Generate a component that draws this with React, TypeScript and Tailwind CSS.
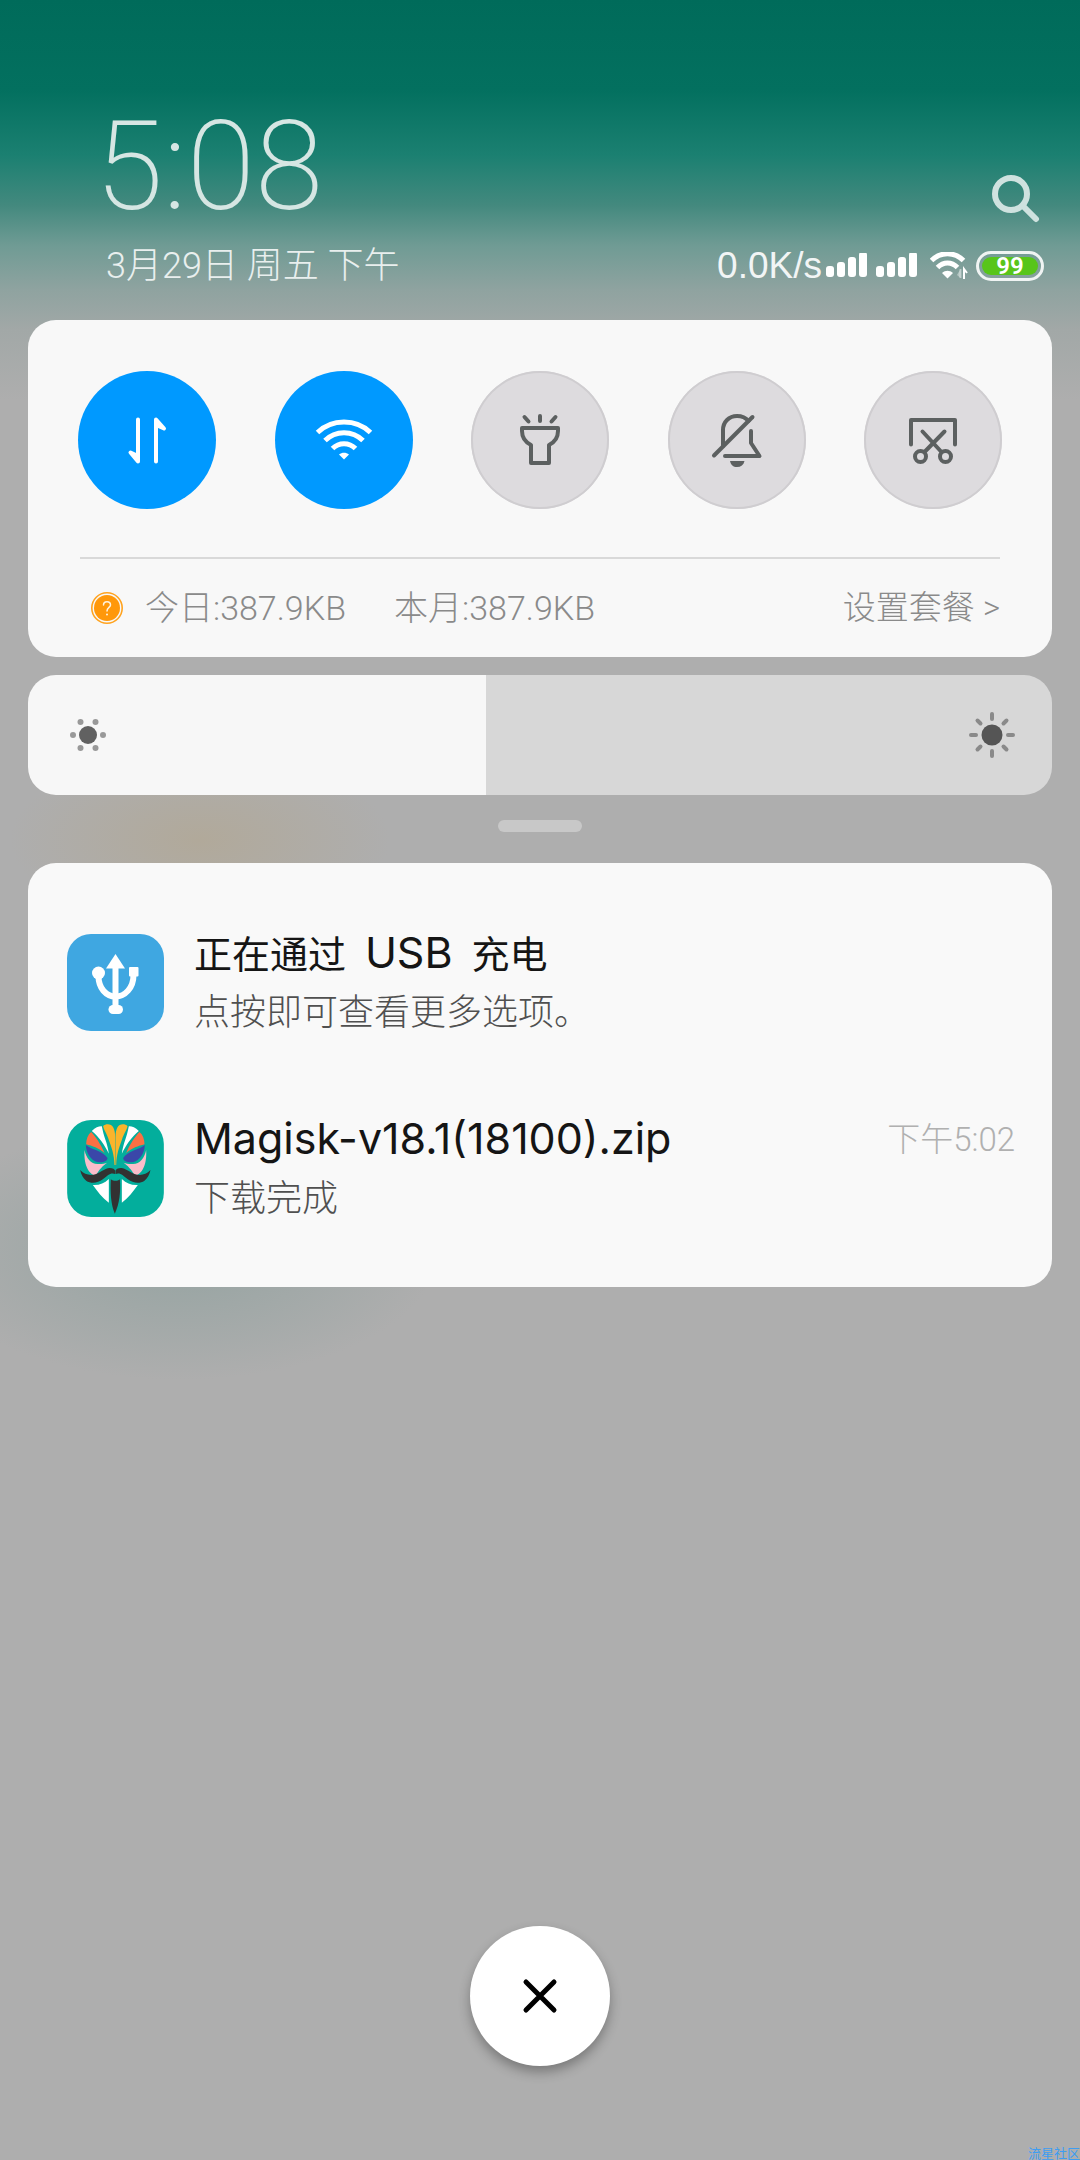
import React, { useState } from 'react';

interface ToggleItem {
  label: string;
  active: boolean;
  icon: React.ElementType;
}

interface NotificationProps {
  icon: React.ReactNode;
  title: React.ReactNode;
  text: string;
  time?: string;
}

const DataIcon: React.FC = () => (
  <svg viewBox="0 0 138 138" className="w-full h-full" fill="none" stroke="currentColor" strokeWidth="4" strokeLinecap="round" strokeLinejoin="round">
    <path d="M60 48.5V90.5L52.500 81.500L60 85" fill="currentColor" />
    <path d="M78 90.500V48.500L86 57.500L78 54" fill="currentColor" />
  </svg>
);

const WifiIcon: React.FC = () => (
  <svg viewBox="0 0 138 138" className="w-full h-full" fill="none" stroke="currentColor" strokeWidth="5">
    <path d="M42.500 61.500C57 47.500 81 47.500 95.500 61.500" />
    <path d="M50 69.500C60.500 59 77.500 59 88 69.500" />
    <path d="M57.500 77.500C64 71 74 71 80.500 77.500" />
    <path d="M64 83.500C67 81 71 81 74 83.500L69 88.500Z" fill="currentColor" stroke="none" />
  </svg>
);

const TorchIcon: React.FC = () => (
  <svg viewBox="0 0 138 138" className="w-full h-full" fill="none" stroke="currentColor" strokeWidth="4" strokeLinecap="round" strokeLinejoin="round">
    <path d="M53.500 46L57.500 50.500M69 45V50M84.500 46L80.500 50.500" />
    <path d="M51 57H87V60C87 66 84 71 78 74V92H60V74C54 71 51 66 51 60Z" />
  </svg>
);

const MuteIcon: React.FC = () => (
  <svg viewBox="0 0 138 138" className="w-full h-full" fill="none" stroke="currentColor" strokeWidth="4" strokeLinecap="round" strokeLinejoin="round">
    <path d="M55 75V59C55 51 61 45 69 45C74 45 78 47 80.500 50" />
    <path d="M84.500 46L46 84.500" />
    <path d="M83 60V72L91.500 85H57" />
    <path d="M62 90H76.500C75.500 94 73 96 69 96C65 96 63 94 62 90Z" fill="currentColor" stroke="none" />
  </svg>
);

const ScreenshotIcon: React.FC = () => (
  <svg viewBox="0 0 138 138" className="w-full h-full" fill="none" stroke="currentColor" strokeWidth="4" strokeLinecap="round" strokeLinejoin="round">
    <path d="M47 73.500V49H91V73.500" />
    <path d="M58.500 60.500L77.500 81M80.500 60.500L60.500 81" />
    <circle cx="56.500" cy="85.500" r="5.500" />
    <circle cx="81.500" cy="85.500" r="5.500" />
  </svg>
);

const SignalIcon: React.FC = () => (
  <svg viewBox="0 0 42 26" className="w-[42px] h-[26px] fill-white">
    <rect x="0" y="13" width="8" height="11" rx="3" />
    <rect x="11" y="9" width="8" height="15" rx="3" />
    <rect x="22" y="4" width="8" height="20" rx="3" />
    <rect x="33" y="-1" width="8" height="25" rx="3" />
  </svg>
);

const StatusWifiIcon: React.FC = () => (
  <svg viewBox="0 0 38 28" className="w-[38px] h-[28px]" fill="none" stroke="#fff" strokeWidth="5">
    <path d="M1.500 8.500C10.500 -0.500 24.500 -0.500 33.500 8.500" />
    <path d="M7.500 15.500C13.500 9.500 21.500 9.500 27.500 15.500" />
    <path d="M12 21C15.500 18 19.500 18 23 21L17.500 26.500Z" fill="#fff" stroke="none" />
    <path d="M30.500 26V17L27 23Z" fill="#fff" fillOpacity="0.400" stroke="none" />
    <path d="M30.500 26V17" strokeOpacity="0.400" strokeWidth="2" />
    <path d="M34 27V17L37 21" strokeWidth="2" />
  </svg>
);

const CoinIcon: React.FC = () => (
  <svg viewBox="0 0 32 32" className="w-8 h-8" fill="none">
    <circle cx="16" cy="16" r="15.200" stroke="#ffa31f" strokeWidth="1.600" />
    <circle cx="16" cy="16" r="13" fill="#ff980a" />
    <path d="M12.500 13C12.500 8.500 19.500 8.500 19.500 13C19.500 15.500 16 15.500 16 19" stroke="#fff3df" strokeWidth="1.500" strokeLinecap="round" />
    <circle cx="16" cy="22.500" r="1" fill="#fff3df" />
  </svg>
);

const DimIcon: React.FC = () => (
  <svg viewBox="0 0 40 40" className="w-10 h-10" fill="#999">
    <circle cx="20" cy="20" r="9" fill="#616161" />
    <circle cx="5" cy="20" r="3" />
    <circle cx="35" cy="20" r="3" />
    <circle cx="12.500" cy="7" r="3" />
    <circle cx="27.500" cy="7" r="3" />
    <circle cx="12.500" cy="33" r="3" />
    <circle cx="27.500" cy="33" r="3" />
  </svg>
);

const BrightIcon: React.FC = () => (
  <svg viewBox="0 0 48 48" className="w-12 h-12" stroke="#8a8a8a" strokeWidth="4" strokeLinecap="round">
    <circle cx="24" cy="24" r="10.500" fill="#555" stroke="none" />
    <path d="M24 3V8M24 40V45M3 24H8M40 24H45M9.500 9.500L12.500 12.500M35.500 35.500L38.500 38.500M9.500 38.500L12.500 35.500M35.500 12.500L38.500 9.500" />
  </svg>
);

const UsbIcon: React.FC = () => (
  <svg viewBox="0 0 97 97" className="w-[97px] h-[97px] shrink-0">
    <rect width="97" height="97" rx="24" fill="#3fa7e1" />
    <g fill="#fff">
      <path d="M48.500 20L58 34.500H39Z" />
      <rect x="45.500" y="30" width="6" height="44" />
      <rect x="41.500" y="71" width="14.500" height="9" rx="4.500" />
      <circle cx="31.500" cy="39" r="6.500" />
      <rect x="62" y="33" width="9.500" height="9.500" rx="1" />
    </g>
    <path d="M31.500 42C31.500 54 39 62.500 48.500 62.500C58 62.500 66.500 54 66.500 41" fill="none" stroke="#fff" strokeWidth="6" />
  </svg>
);

// one half of the mask, drawn twice
const MaskHalf: React.FC = () => (
  <>
    <path d="M193 193C192 160 184 140 176 118C170 98 160 86 159 76C166 68 184 68 189 80C193 88 195 96 195 110V193Z" fill="#fbb42b" />
    <path d="M125 91C136 80 148 76 155 77C158 92 161 104 166 118C170 130 174 144 176 159C164 134 146 108 125 91Z" fill="#fff" />
    <path d="M123 94C136 108 152 130 163 157C146 142 126 136 108 131C108 116 113 102 123 94Z" fill="#fb7043" />
    <path d="M103 148C108 172 122 190 142 190C154 191 164 188 171 186C160 194 146 206 137 225C120 222 100 200 103 148Z" fill="#fabdca" />
    <path d="M107 133C122 146 160 152 172 172C171 184 154 187 141 184C124 179 108 160 107 133Z" fill="#3a47a9" />
    <path d="M90 208C104 222 120 226 138 220C156 212 164 204 178 202C188 202 194 206 195 210V220C182 214 172 224 158 236C142 248 122 250 108 240C98 232 93 222 90 208Z" fill="#323232" />
    <path d="M128 253C148 254 162 248 176 235V306C156 292 142 272 128 253Z" fill="#fff" />
  </>
);

const MagiskIcon: React.FC = () => (
  <svg viewBox="51 58 290 291" className="w-[97px] h-[97px] shrink-0">
    <rect x="51" y="58" width="290" height="291" rx="72" fill="#03ae9c" />
    <MaskHalf />
    <g transform="translate(391 0) scale(-1 1)">
      <MaskHalf />
    </g>
    <path d="M182 236C190 242 202 242 209 236C212 274 208 310 194 339C182 312 180 274 182 236Z" fill="#323232" />
  </svg>
);

const Notification: React.FC<NotificationProps> = ({ icon, title, text, time }) => (
  <li className="flex items-center gap-[30px] py-[33px]">
    {icon}
    <div className="flex-1 min-w-0 pt-1">
      <div className="flex items-start justify-between">
        <h2 className="text-[38px] leading-[58px] font-normal text-[#151515] whitespace-pre">{title}</h2>
        {time && <time className="text-[33px] leading-[56px] font-light text-[#b0b0b0]">{time}</time>}
      </div>
      <p className="text-[36px] leading-[58px] font-light text-[#505050]">{text}</p>
    </div>
  </li>
);

const toggles: ToggleItem[] = [
  { label: '移动数据', active: true, icon: DataIcon },
  { label: 'WLAN', active: true, icon: WifiIcon },
  { label: '手电筒', active: false, icon: TorchIcon },
  { label: '静音', active: false, icon: MuteIcon },
  { label: '截屏', active: false, icon: ScreenshotIcon },
];

const App: React.FC = () => {
  const [brightness, setBrightness] = useState<number>(114);
  const percent = (brightness / 255) * 100;

  return (
    <div
      className="relative min-h-screen flex flex-col px-7 overflow-hidden font-['Roboto','Noto_Sans_CJK_SC',sans-serif] bg-[#aeaeae] bg-[radial-gradient(ellipse_190px_90px_at_200px_840px,#b1a99a,transparent),radial-gradient(ellipse_260px_130px_at_180px_1250px,#94a3a1,transparent),linear-gradient(to_bottom,#006b5a_0px,#03705f_90px,#1b8071_155px,#43897e_205px,#6f9b94_245px,#8fa3a0_290px,#a2a8a7_330px,#aeaeae_400px)]"
    >
      {/* Clock and status */}
      <header className="pt-[107px] pb-[29px]">
        <div className="flex items-end justify-between pl-[67px] pr-3">
          <div className="text-[124px] leading-[120px] font-extralight text-[#d6e6e3]">5:08</div>
          <button aria-label="搜索" className="mb-1 text-[#cfe2df]">
            <svg viewBox="0 0 48 48" className="w-12 h-12" fill="none" stroke="currentColor" strokeWidth="6" strokeLinecap="round">
              <circle cx="19" cy="19" r="16" />
              <path d="M31 31L44 44" />
            </svg>
          </button>
        </div>
        <div className="mt-[14px] flex items-center justify-between pl-[78px] pr-2">
          <div className="text-[36px] leading-[50px] font-light text-[#e9efee]">3月29日 周五 下午</div>
          <div className="flex items-center gap-2">
            <div className="flex items-center gap-1">
              <span className="font-['Liberation_Sans',sans-serif] text-[37px] leading-[50px] text-[#f2f5f5]">0.0K/s</span>
              <SignalIcon />
            </div>
            <div className="flex items-center gap-3">
              <SignalIcon />
              <StatusWifiIcon />
            </div>
            <div className="w-[68px] h-[30px] rounded-full border-[3px] border-[#f0f4f3] p-[3px]">
              <div className="flex items-center justify-center h-full rounded-full bg-[#58c51a] text-white text-[24px] leading-[18px] font-semibold">99</div>
            </div>
          </div>
        </div>
      </header>

      <main>
        {/* Quick toggles */}
        <section className="rounded-[28px] bg-[#f8f8f8] pt-[51px]">
          <div className="flex justify-between px-[50px]">
            {toggles.map(({ label, active, icon: Icon }) => (
              <button
                key={label}
                aria-label={label}
                aria-pressed={active}
                className={`w-[138px] h-[138px] rounded-full ${
                  active ? 'bg-[#0099ff] text-white' : 'bg-[#dddbde] text-[#5c6060] shadow-[inset_0_0_0_2px_#cfcdd0]'
                }`}
              >
                <Icon />
              </button>
            ))}
          </div>
          <div className="mx-[52px] mt-12 border-t-2 border-[#d9d9d9] h-[100px] flex items-center text-[34px] font-light text-[#8a8a8a]">
            <div className="ml-[11px] mr-[22px]">
              <CoinIcon />
            </div>
            <span className="mr-12">今日:387.9KB</span>
            <span>本月:387.9KB</span>
            <a href="#plan" className="ml-auto text-[33px]">设置套餐 &gt;</a>
          </div>
        </section>

        {/* Brightness */}
        <section className="relative mt-[18px] h-[120px] rounded-[28px] overflow-hidden">
          <input
            type="range"
            min="0"
            max="255"
            value={brightness}
            onChange={(e) => setBrightness(Number(e.target.value))}
            aria-label="亮度"
            className="block w-full h-full appearance-none cursor-pointer [&::-webkit-slider-thumb]:appearance-none [&::-webkit-slider-thumb]:w-0"
            style={{ background: `linear-gradient(to right, #f7f7f7 ${percent}%, #d7d7d7 ${percent}%)` }}
          />
          <div className="absolute inset-0 flex items-center justify-between pl-10 pr-9 pointer-events-none">
            <DimIcon />
            <BrightIcon />
          </div>
        </section>

        <div className="mx-auto mt-[25px] mb-[31px] w-[84px] h-3 rounded-full bg-[#c8c8c8]" />

        {/* Notifications */}
        <ul className="rounded-[28px] bg-[#f9f9f9] py-[26px] pl-[39px] pr-[37px]">
          <Notification
            icon={<UsbIcon />}
            title={<>正在通过{'  '}<span className="font-['Inter',sans-serif] text-[43px] leading-none">USB</span>{'  '}充电</>}
            text="点按即可查看更多选项。"
          />
          <Notification
            icon={<MagiskIcon />}
            title={<span className="font-['Inter',sans-serif] text-[43px] leading-none">Magisk-v18.1(18100).zip</span>}
            text="下载完成"
            time="下午5:02"
          />
        </ul>
      </main>

      <button
        aria-label="清除通知"
        className="mt-auto mb-[94px] mx-auto w-[140px] h-[140px] rounded-full bg-white text-black flex items-center justify-center shadow-[0_6px_12px_rgba(0,0,0,0.3)]"
      >
        <svg viewBox="0 0 36 36" className="w-9 h-9" fill="none" stroke="currentColor" strokeWidth="5" strokeLinecap="round">
          <path d="M4 4L32 32M32 4L4 32" />
        </svg>
      </button>

      <span className="absolute right-0 bottom-0 text-[13px] leading-3 text-[#3d9df2]">流星社区</span>
    </div>
  );
};

export default App;
